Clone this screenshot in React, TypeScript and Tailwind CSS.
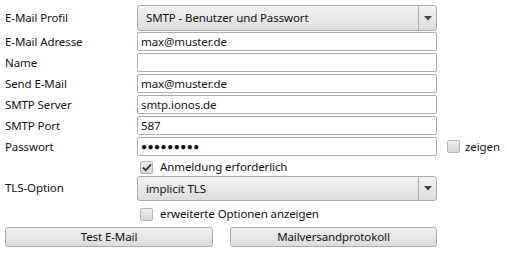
import React from "react";

const font = { fontFamily: '"Noto Sans", "Open Sans", sans-serif' };

const Arrow = () => (
  <svg width="8" height="5" viewBox="0 0 8 5">
    <path d="M0 0 H8 L4 4.5 Z" fill="#444" />
  </svg>
);

const Combo = ({ value }: { value: string }) => (
  <div className="flex h-full w-[300px] rounded-[3px] border border-[#acacac] bg-gradient-to-b from-[#f2f2f2] to-[#dddddd]">
    <div className="flex flex-1 items-center pl-[8px] text-[11.5px] text-[#111]">{value}</div>
    <div className="flex w-[18px] items-center justify-center border-l border-[#acacac]">
      <Arrow />
    </div>
  </div>
);

const TextBox = ({ value }: { value: string }) => (
  <div className="flex h-[19px] w-[300px] items-center rounded-[2px] border border-[#abadb3] bg-white pl-[3px] text-[11.5px] text-[#111]">
    {value}
  </div>
);

const Check = ({ checked }: { checked?: boolean }) => (
  <div className="flex h-[13px] w-[13px] items-center justify-center rounded-[2px] border border-[#b5b5b5] bg-gradient-to-b from-[#f0f0f0] to-[#d6d6d6]">
    {checked && (
      <svg width="10" height="9" viewBox="0 0 10 9">
        <path d="M1 4.5 L3.8 7.3 L9 1.3" fill="none" stroke="#333" strokeWidth="1.8" />
      </svg>
    )}
  </div>
);

const Button = ({ label, w }: { label: string; w: string }) => (
  <div className={`flex h-[20px] ${w} items-center justify-center rounded-[3px] border border-[#acacac] bg-gradient-to-b from-[#f0f0f0] to-[#dcdcdc] text-[11.5px] text-[#111]`}>
    {label}
  </div>
);

const rows = [
  { label: "E-Mail Adresse", value: "max@muster.de" },
  { label: "Name", value: "" },
  { label: "Send E-Mail", value: "max@muster.de" },
  { label: "SMTP Server", value: "smtp.ionos.de" },
  { label: "SMTP Port", value: "587" },
];

export default function App() {
  return (
    <div className="h-[258px] w-[507px] bg-white pl-[5px] pt-[5px] text-[11.5px] tracking-[-0.1px] text-[#111]" style={font}>
      {/* Profil */}
      <div className="flex h-[26px] items-center">
        <div className="w-[132px] pb-[1px]">E-Mail Profil</div>
        <Combo value="SMTP - Benutzer und Passwort" />
      </div>

      {/* Eingabefelder */}
      <div className="mt-[1px] flex flex-col gap-[2px]">
        {rows.map((r) => (
          <div key={r.label} className="flex items-center">
            <div className="w-[132px]">{r.label}</div>
            <TextBox value={r.value} />
          </div>
        ))}
        <div className="flex items-center">
          <div className="w-[132px]">Passwort</div>
          <div className="flex h-[19px] w-[300px] items-center rounded-[2px] border border-[#abadb3] bg-white pl-[3px] text-[10px] tracking-[0.5px] text-[#111]">
            ●●●●●●●●●
          </div>
          <div className="ml-[10px] flex items-center gap-[5px]">
            <Check />
            <span>zeigen</span>
          </div>
        </div>
      </div>

      <div className="mt-[4px] flex h-[14px] items-center gap-[7px] pl-[135px]">
        <Check checked />
        <span>Anmeldung erforderlich</span>
      </div>

      <div className="mt-[2px] flex h-[25px] items-center">
        <div className="w-[132px] pb-[2px]">TLS-Option</div>
        <Combo value="implicit TLS" />
      </div>

      <div className="mt-[6px] flex h-[14px] items-center gap-[7px] pl-[135px]">
        <Check />
        <span>erweiterte Optionen anzeigen</span>
      </div>

      <div className="mt-[6px] flex gap-[17px]">
        <Button label="Test E-Mail" w="w-[208px]" />
        <Button label="Mailversandprotokoll" w="w-[207px]" />
      </div>
    </div>
  );
}
